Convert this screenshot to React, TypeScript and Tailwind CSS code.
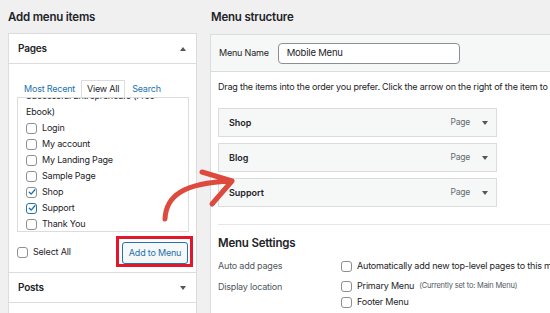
import React from 'react';

const pages = [
  { label: 'Successful Entrepreneurs (Free', check: 'none', noBox: true },
  { label: 'Ebook)', check: 'none', noBox: true },
  { label: 'Login', check: 'off' },
  { label: 'My account', check: 'off' },
  { label: 'My Landing Page', check: 'off' },
  { label: 'Sample Page', check: 'off' },
  { label: 'Shop', check: 'on' },
  { label: 'Support', check: 'focus' },
  { label: 'Thank You', check: 'off' },
];

const menuItems = ['Shop', 'Blog', 'Support'];

// Casilla estilo WordPress
const Checkbox = ({ state = 'off' }: { state?: string }) => (
  <span
    className={`flex h-[11px] w-[11px] shrink-0 items-center justify-center rounded-[3px] bg-white ${
      state === 'focus' ? 'border-[1.5px] border-[#2271b1]' : 'border border-[#8c8f94]'
    }`}
  >
    {(state === 'on' || state === 'focus') && (
      <svg width="8" height="8" viewBox="0 0 10 10">
        <path d="M1.6 5.2 L4 7.6 L8.6 2.2" fill="none" stroke="#2271b1" strokeWidth="1.7" strokeLinecap="round" strokeLinejoin="round" />
      </svg>
    )}
  </span>
);

const Caret = ({ up = false }: { up?: boolean }) => (
  <svg width="6" height="4" viewBox="0 0 6 4">
    <path d={up ? 'M0 4 L3 0 L6 4 Z' : 'M0 0 L3 4 L6 0 Z'} fill="#50575e" />
  </svg>
);

export default function App() {
  return (
    <div
      className="relative h-[313px] w-[550px] overflow-hidden bg-[#f0f0f1] text-[9px] tracking-[-0.2px] text-[#1d2327]"
      style={{ fontFamily: 'Inter, "Liberation Sans", sans-serif' }}
    >
      <div className="flex">
        {/* Columna izquierda */}
        <div className="ml-[8px] w-[189px] shrink-0">
          <div className="h-[33px] pt-[10px] text-[11.5px] font-semibold leading-[14px]">Add menu items</div>
          <div className="border border-[#dcdcde] bg-white">
            <div className="flex h-[30px] items-center justify-between border-b border-[#dcdcde] pl-[9px] pr-[10px]">
              <span className="text-[10px] font-semibold">Pages</span>
              <Caret up />
            </div>
            <div className="pl-[8px] pr-[7px] pt-[16px]">
              <div className="flex h-[17px] items-end whitespace-nowrap">
                <span className="ml-[7px] pb-[2px] text-[#2271b1]">Most Recent</span>
                <span className="ml-[6px] flex h-[17px] w-[44px] items-center justify-center border border-b-0 border-[#dcdcde] bg-white">View All</span>
                <span className="ml-[7px] pb-[2px] text-[#2271b1]">Search</span>
              </div>
              <div className="h-[135px] overflow-hidden border border-[#dcdcde] bg-white">
                <div className="-mt-[10px] pl-[8px]">
                  {pages.map((p) => (
                    <div key={p.label} className="flex h-[16px] items-center gap-[5px] whitespace-nowrap">
                      {!p.noBox && <Checkbox state={p.check} />}
                      <span>{p.label}</span>
                    </div>
                  ))}
                </div>
              </div>
              <div className="flex h-[40px] items-center justify-between">
                <div className="flex items-center gap-[5px]">
                  <Checkbox />
                  <span>Select All</span>
                </div>
                <div className="relative mr-[1px] mt-[2px]">
                  <button className="flex h-[22px] w-[66px] items-center justify-center whitespace-nowrap rounded-[3px] border border-[#2271b1] bg-[#f6f7f7] text-[#2271b1]">
                    Add to Menu
                  </button>
                  <div className="absolute -left-[6px] -top-[6px] h-[31px] w-[77px] border-[3px] border-[#e4162b]" />
                </div>
              </div>
            </div>
            <div className="flex h-[30px] items-center justify-between border-t border-[#dcdcde] pl-[9px] pr-[10px]">
              <span className="text-[10px] font-semibold">Posts</span>
              <Caret />
            </div>
            <div className="h-[20px] border-t border-[#dcdcde]" />
          </div>
        </div>

        {/* Columna derecha */}
        <div className="ml-[13px] w-[420px] shrink-0">
          <div className="h-[34px] pt-[10px] pl-[1px] text-[11.5px] font-semibold leading-[14px]">Menu structure</div>
          <div className="border border-[#dcdcde] bg-white">
            <div className="flex h-[37px] items-center border-b border-[#dcdcde] bg-[#f6f7f7] pl-[8px]">
              <span>Menu Name</span>
              <div className="ml-[9px] flex h-[21px] w-[182px] items-center rounded-[4px] border border-[#8c8f94] bg-white pl-[8px] text-[9.5px]">
                Mobile Menu
              </div>
            </div>
            <div className="pl-[7px]">
              <div className="flex h-[30px] items-center whitespace-nowrap">
                Drag the items into the order you prefer. Click the arrow on the right of the item to reveal additional configuration options.
              </div>
              <div className="flex w-[279px] flex-col gap-[6px] pt-[6px]">
                {menuItems.map((m) => (
                  <div key={m} className="flex h-[29px] items-center justify-between border border-[#dcdcde] bg-[#f6f7f7] pl-[10px] pr-[8px]">
                    <span className="font-semibold tracking-normal">{m}</span>
                    <div className="flex items-center gap-[12px]">
                      <span className="text-[8.5px] text-[#646970]">Page</span>
                      <Caret />
                    </div>
                  </div>
                ))}
              </div>
              <div className="mt-[17px] border-t border-[#e6e6e8]" />
              <div className="pt-[11px] text-[11.5px] font-semibold leading-[14px]">Menu Settings</div>
              <div className="mt-[6px] flex h-[20px] items-center">
                <span className="w-[123px] text-[#50575e]">Auto add pages</span>
                <Checkbox />
                <span className="ml-[5px] whitespace-nowrap">Automatically add new top-level pages to this menu</span>
              </div>
              <div className="mt-[2px] flex">
                <span className="w-[123px] pt-[2px] text-[#50575e]">Display location</span>
                <div className="flex flex-col">
                  {['Primary Menu', 'Footer Menu', 'Social Menu'].map((loc, i) => (
                    <div key={loc} className="flex h-[16px] items-center gap-[5px] whitespace-nowrap">
                      <Checkbox />
                      <span>{loc}</span>
                      {i === 0 && <span className="text-[7.5px] text-[#50575e]">(Currently set to: Main Menu)</span>}
                    </div>
                  ))}
                </div>
              </div>
            </div>
          </div>
        </div>
      </div>

      {/* Flecha roja dibujada */}
      <svg className="pointer-events-none absolute left-0 top-0" width="550" height="313">
        <path
          d="M165 219 C166 196 183 183 231 181 M202 172 L232 181 L212 204"
          fill="none"
          stroke="#dd4b3e"
          strokeWidth="5"
          strokeLinecap="round"
          strokeLinejoin="round"
        />
      </svg>
    </div>
  );
}
